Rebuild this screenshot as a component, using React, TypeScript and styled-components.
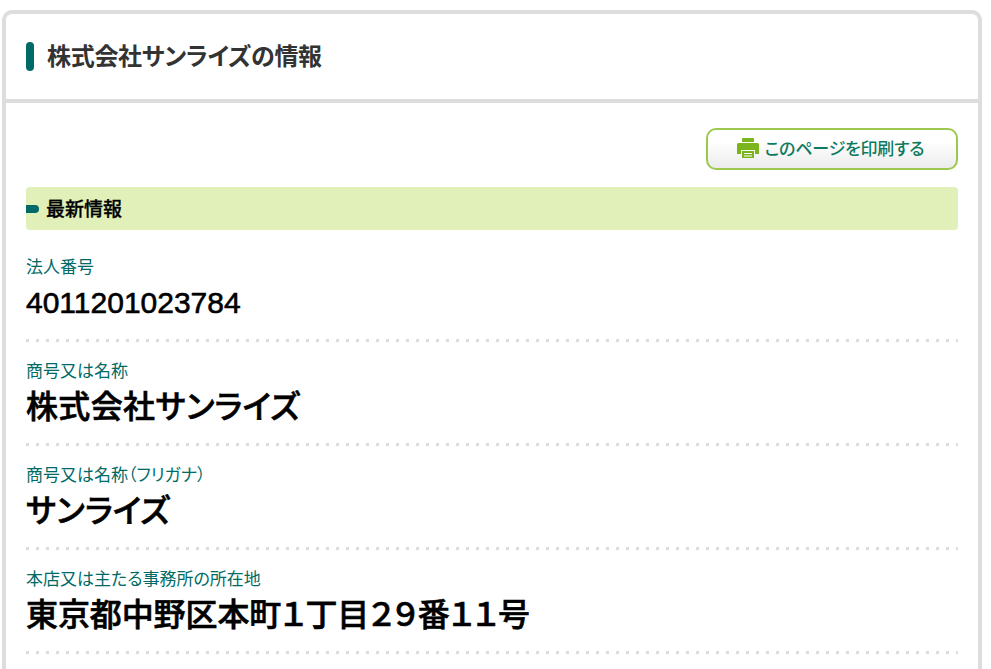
import React from "react";
import styled, { createGlobalStyle } from "styled-components";

const FONT = `"Liberation Sans", "Noto Sans CJK JP", sans-serif`;

const GlobalStyle = createGlobalStyle`
  html, body {
    margin: 0;
    padding: 0;
    background: #fff;
  }
  body {
    font-family: ${FONT};
    font-feature-settings: "palt";
  }
`;

const Page = styled.div`
  box-sizing: border-box;
  height: 669px;
  padding: 10px 9px 0 2px;
  overflow: hidden;
`;

const Card = styled.section`
  border: 4px solid #ddd;
  border-radius: 10px;
  background: #fff;
`;

const Heading = styled.header`
  display: flex;
  align-items: center;
  gap: 13px;
  height: 85px;
  padding-left: 20px;
  border-bottom: 4px solid #ddd;
`;

const HeadingBar = styled.span`
  width: 8px;
  height: 29px;
  border-radius: 4px;
  background: #006b66;
`;

const HeadingText = styled.h1`
  margin: 0 0 4px;
  font-size: 24px;
  font-weight: 700;
  letter-spacing: -0.3px;
  color: #333;
`;

const Body = styled.div`
  padding: 25px 20px 40px;
`;

const Toolbar = styled.div`
  display: flex;
  justify-content: flex-end;
  margin-bottom: 17px;
`;

const PrintButton = styled.button`
  display: flex;
  align-items: center;
  justify-content: center;
  gap: 6px;
  box-sizing: border-box;
  width: 252px;
  height: 42px;
  padding: 0 3px 3px 0;
  border: 2px solid #9dc850;
  border-radius: 10px;
  background: linear-gradient(#fff 30%, #ececec);
  font-family: ${FONT};
  font-feature-settings: "palt";
  font-size: 17px;
  font-weight: 500;
  letter-spacing: -0.2px;
  color: #0d7a5f;
`;

const SectionBand = styled.h2`
  display: flex;
  align-items: center;
  gap: 7px;
  box-sizing: border-box;
  height: 43px;
  margin: 0 0 20px;
  padding-bottom: 2px;
  border-radius: 4px;
  background: #e0f0b8;
  font-size: 19px;
  font-weight: 500;
  -webkit-text-stroke: 0.3px #000;
  color: #000;
`;

const SectionMarker = styled.span`
  width: 13px;
  height: 8px;
  margin-top: 2px;
  border-radius: 0 4px 4px 0;
  background: #006b66;
`;

const Row = styled.div`
  box-sizing: border-box;
  height: 92px;
  margin-bottom: 12px;
  padding-top: 8px;
  background-image: linear-gradient(90deg, #ddd 3px, transparent 3px);
  background-size: 10px 3px;
  background-position: left bottom;
  background-repeat: repeat-x;
`;

const Label = styled.div`
  height: 20px;
  font-size: 17px;
  line-height: 20px;
  color: #006b66;
`;

const Value = styled.div<{ $size: number; $spacing: number }>`
  margin-top: 3px;
  font-size: ${(p) => p.$size}px;
  font-weight: 500;
  -webkit-text-stroke: 0.6px #000;
  line-height: 44px;
  letter-spacing: ${(p) => p.$spacing}px;
  color: #000;
`;

const PrintIcon = () => (
  <svg width="22" height="20" viewBox="0 0 22 20" aria-hidden="true">
    <path fill="#7ab51d" d="M6 0h10a1 1 0 0 1 1 1v3H5V1a1 1 0 0 1 1-1zM1.5 5h19A1.5 1.5 0 0 1 22 6.5V16h-4v-4H4v4H0V6.5A1.5 1.5 0 0 1 1.5 5z" />
    <path fill="#7ab51d" d="M5 13h12v7H5z" />
    <path fill="#fff" d="M7 15h8v1H7zM7 17.5h8v1H7z" />
  </svg>
);

const rows = [
  { label: "法人番号", value: "4011201023784", size: 30, spacing: 0 },
  { label: "商号又は名称", value: "株式会社サンライズ", size: 32, spacing: 0.35 },
  { label: "商号又は名称（フリガナ）", value: "サンライズ", size: 32, spacing: 0.2 },
  { label: "本店又は主たる事務所の所在地", value: "東京都中野区本町１丁目２９番１１号", size: 32, spacing: -0.1 },
];

export default function App() {
  return (
    <>
      <GlobalStyle />
      <Page>
        <Card>
          <Heading>
            <HeadingBar />
            <HeadingText>株式会社サンライズの情報</HeadingText>
          </Heading>
          <Body>
            <Toolbar>
              <PrintButton type="button">
                <PrintIcon />
                このページを印刷する
              </PrintButton>
            </Toolbar>
            <SectionBand>
              <SectionMarker />
              最新情報
            </SectionBand>
            {rows.map((row) => (
              <Row key={row.label}>
                <Label>{row.label}</Label>
                <Value $size={row.size} $spacing={row.spacing}>
                  {row.value}
                </Value>
              </Row>
            ))}
          </Body>
        </Card>
      </Page>
    </>
  );
}
